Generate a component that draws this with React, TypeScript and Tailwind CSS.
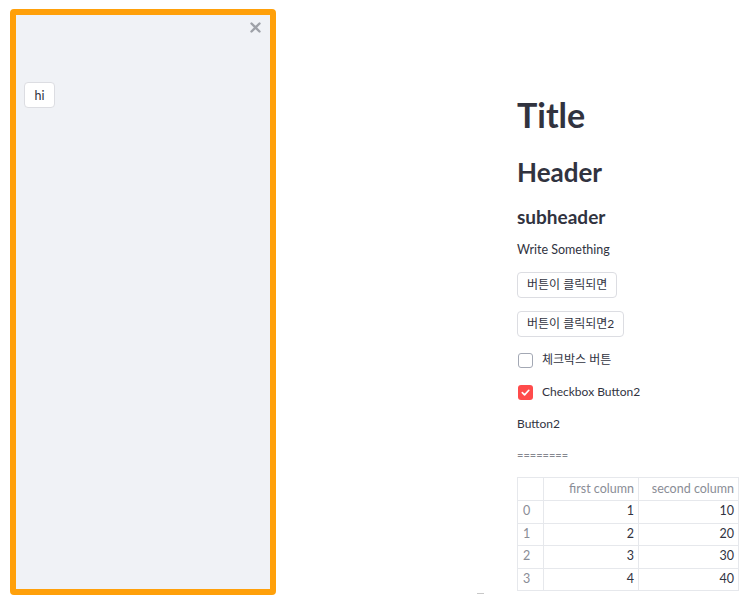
import React from "react";

const font = { fontFamily: '"Lato", "Noto Sans CJK KR", sans-serif' };

function Check({ checked }: { checked?: boolean }) {
  if (checked) {
    return (
      <div className="w-[15px] h-[15px] rounded-[3px] bg-[#ff4b4b] flex items-center justify-center">
        <svg width="11" height="11" viewBox="0 0 12 12">
          <path d="M2.5 6.2 L5 8.6 L9.6 3.6" fill="none" stroke="white" strokeWidth="1.8" strokeLinecap="round" strokeLinejoin="round" />
        </svg>
      </div>
    );
  }
  return <div className="w-[15px] h-[15px] rounded-[3px] border border-[#a3a8b4] bg-white" />;
}

export default function App() {
  const rows = [
    [0, 1, 10],
    [1, 2, 20],
    [2, 3, 30],
    [3, 4, 40],
  ];
  return (
    <div className="relative w-[752px] h-[602px] bg-white flex text-[#31333f] overflow-hidden" style={font}>
      <div className="ml-[10px] mt-[9px] w-[266px] h-[586px] border-[6px] border-[#ffa00a] rounded-[4px] bg-[#f0f2f6] flex flex-col shrink-0">
        <div className="h-[24px] flex justify-end pr-[9px] pt-[7px]">
          <svg width="11" height="11" viewBox="0 0 11 11">
            <path d="M1.5 1.5 L9.5 9.5 M9.5 1.5 L1.5 9.5" stroke="#9ea1a8" strokeWidth="2.4" strokeLinecap="round" />
          </svg>
        </div>
        <div className="mt-[43px] ml-[8px]">
          <button className="w-[31px] h-[26px] pt-[2px] rounded-[4px] border border-[#dcdde2] bg-white text-[12.5px] text-[#31333f] flex items-center justify-center">
            hi
          </button>
        </div>
      </div>

      <div className="ml-[241px] w-[222px] flex flex-col">
        <div className="mt-[95px] h-[40px] leading-[40px] text-[34px] font-bold">Title</div>
        <div className="mt-[20px] h-[34px] leading-[34px] text-[26px] font-bold">Header</div>
        <div className="mt-[15px] h-[26px] leading-[26px] text-[19px] font-bold">subheader</div>
        <div className="mt-[10px] h-[20px] leading-[20px] text-[12.5px]">Write Something</div>
        <div className="mt-[12px] flex">
          <button className="h-[26px] px-[9px] rounded-[4px] border border-[#dcdde2] bg-white text-[12px] text-[#31333f]">
            버튼이 클릭되면
          </button>
        </div>
        <div className="mt-[13px] flex">
          <button className="h-[26px] px-[9px] rounded-[4px] border border-[#dcdde2] bg-white text-[12px] text-[#31333f]">
            버튼이 클릭되면2
          </button>
        </div>
        <div className="mt-[13px] h-[20px] flex items-center gap-[9px] pl-[1px]">
          <Check />
          <span className="text-[12px]">체크박스 버튼</span>
        </div>
        <div className="mt-[12px] h-[20px] flex items-center gap-[9px] pl-[1px]">
          <Check checked />
          <span className="text-[12px]">Checkbox Button2</span>
        </div>
        <div className="mt-[12px] h-[20px] leading-[20px] text-[12px]">Button2</div>
        <div className="mt-[11px] h-[20px] leading-[20px] text-[11px] text-[#85878f]">========</div>
        <div className="mt-[12px]">
          <table className="border-collapse text-[12.5px]" style={{ width: 222 }}>
            <thead>
              <tr className="h-[23px]">
                <th className="w-[26px] border border-[#e6e8ec]"></th>
                <th className="w-[95px] border border-[#e6e8ec] text-right pr-[4px] font-normal text-[#8a8d96]">first column</th>
                <th className="border border-[#e6e8ec] text-right pr-[4px] font-normal text-[#8a8d96]">second column</th>
              </tr>
            </thead>
            <tbody>
              {rows.map((r) => (
                <tr key={r[0]} className="h-[22.5px]">
                  <td className="border border-[#e6e8ec] text-left pl-[5px] text-[#8a8d96]">{r[0]}</td>
                  <td className="border border-[#e6e8ec] text-right pr-[4px]">{r[1]}</td>
                  <td className="border border-[#e6e8ec] text-right pr-[4px]">{r[2]}</td>
                </tr>
              ))}
            </tbody>
          </table>
        </div>
      </div>
      <div className="absolute left-[477px] top-[593px] w-[7px] h-[1px] bg-[#c8c8c8]" />
    </div>
  );
}
